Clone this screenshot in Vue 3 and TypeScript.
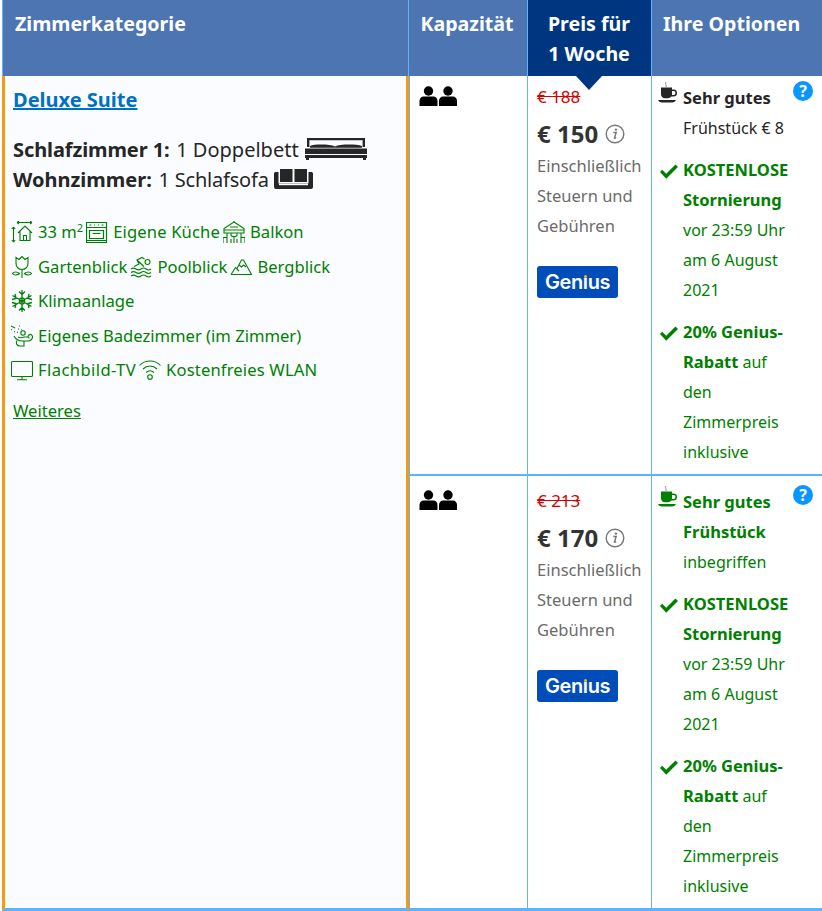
<script setup lang="ts">
interface Offer {
  oldPrice: string
  price: string
  breakfastGreen: boolean
  breakfastLines: string[]
  breakfastPlain: string
}
const offers: Offer[] = [
  { oldPrice: '€ 188', price: '€ 150', breakfastGreen: false, breakfastLines: ['Sehr gutes'], breakfastPlain: 'Frühstück € 8' },
  { oldPrice: '€ 213', price: '€ 170', breakfastGreen: true, breakfastLines: ['Sehr gutes', 'Frühstück'], breakfastPlain: 'inbegriffen' },
]
</script>

<template>
  <div class="page">
    <div class="head h1">Zimmerkategorie</div>
    <div class="head h2">Kapazität</div>
    <div class="head h3">Preis für<br />1 Woche<span class="notch"></span></div>
    <div class="head h4">Ihre Optionen</div>

    <div class="room">
      <a class="title">Deluxe Suite</a>
      <div class="beds">
        <div class="bedline">
          <b class="tight">Schlafzimmer 1:</b> 1 Doppelbett
          <svg class="bed" width="64" height="22" viewBox="0 0 64 22" fill="#262626">
            <path d="M3 0h58v2.200H3zM3 0h2.400v9H3zM58.600 0H61v9h-2.400z" />
            <path d="M6 8c4-2 20-2 25 .4 5-2.400 21-2.400 27-.4v1.800H6z" />
            <path d="M1 10.500h62V16H1zM1 17h62v3H1zM2 20h3v2H2zM59 20h3v2h-3z" />
          </svg>
        </div>
        <div class="bedline">
          <b>Wohnzimmer:</b> <span class="sofa-text">1 Schlafsofa</span>
          <svg class="sofa" width="39" height="22" viewBox="0 0 39 22" fill="#262626">
            <path d="M6 1h12.500v13H6zM20.500 1H33v13H20.500z" />
            <path d="M0 5.500C0 4.500 1 4 2 4h2.500v11.500h30V4H37c1 0 2 .5 2 1.500V19a2 2 0 0 1-2 2H2a2 2 0 0 1-2-2z" />
            <rect x="5" y="15.600" width="29" height="1.600" fill="#fbfcff" />
          </svg>
        </div>
      </div>

      <div class="fac">
        <span class="item">
          <svg class="ic" viewBox="0 0 22 22"><path d="M6 1.500h15M6 1.500L8 0M6 1.500L8 3M21 1.500L19 0M21 1.500L19 3M2.500 6v15M2.500 6L.8 8M2.500 6l1.700 2M2.500 21L.8 19M2.500 21l1.700-2M7 12l7-7 7 7M9 10.500v9h10v-9M12.500 19.500v-5h3v5" /></svg>
          <span>33 m<sup>2</sup></span>
        </span>
        <span class="item">
          <svg class="ic oven" viewBox="0 0 22 22"><path d="M.5 1.500h20v20H.5zM.5 6.500h20M3.500 4h2M8 4h1M12 4h1M15.500 4h2M3.500 9.500h14v8h-14zM6.500 12.500h8M.5 19.500h20" /></svg>
          <span class="wide1">Eigene Küche</span>
        </span>
        <span class="item">
          <svg class="ic" viewBox="0 0 22 22"><path d="M11 1L1 7.500V9h20V7.500zM11 0v1M7 6h8M1 9v3h20V9M4 12v10M18 12v10M0 16.500h4M18 16.500h4M0 16.500V22M22 16.500V22M8 12v2c0 2 6 2 6 0v-2M11 16v6M8 22v-4M14 22v-4" /></svg>
          <span>Balkon</span>
        </span>
      </div>
      <div class="fac">
        <span class="item">
          <svg class="ic" viewBox="0 0 22 22"><path d="M5 1.500l3 2 3-3 3 3 3-2v6a6 6 0 0 1-12 0zM11 13.500V22M1.500 17.500c1-2 5-2 7 0-2 2-6 2-7 0zM20.500 17.500c-1-2-5-2-7 0 2 2 6 2 7 0z" /></svg>
          <span>Gartenblick</span>
        </span>
        <span class="item">
          <svg class="ic" viewBox="0 0 22 22"><path d="M1 13c1.700-1.300 3-1.300 5 0s3.300 1.300 5 0 3.300-1.300 5 0 3.300 1.300 5 0M1 16.500c1.700-1.300 3-1.300 5 0s3.300 1.300 5 0 3.300-1.300 5 0 3.300 1.300 5 0M1 20c1.700-1.300 3-1.300 5 0s3.300 1.300 5 0 3.300-1.300 5 0 3.300 1.300 5 0M4 10.500l5-2.500-2-4 5-2.500 2.500 1.500M7.500 4.500l6.500 6" /><circle cx="17.500" cy="6" r="2.500" /></svg>
          <span>Poolblick</span>
        </span>
        <span class="item">
          <svg class="ic" viewBox="0 0 22 22"><path d="M1 18.500h20.500L13.500 4h-2L7 12.500M1 18.500l4.500-7 3.500 3.500M9 9l2.500 2 2-2 2.500 2" /></svg>
          <span>Bergblick</span>
        </span>
      </div>
      <div class="fac">
        <span class="item">
          <svg class="ic snow" viewBox="0 0 22 22"><path d="M11 0v22M1.500 5.500l19 11M20.500 5.500l-19 11M8 1.500l3 3 3-3M8 20.500l3-3 3 3M1 9.500l4-1L4 4M21 12.500l-4 1 1 4.500M21 9.500l-4-1L18 4M1 12.500l4 1L4 18M8.500 9l2.500-1.500L13.500 9v4L11 14.500 8.500 13z" /></svg>
          <span>Klimaanlage</span>
        </span>
      </div>
      <div class="fac">
        <span class="item">
          <svg class="ic" viewBox="0 0 22 22"><path d="M0 1l4 2M0 4.500l1 .5M3 6.500l1 .5M8 1h1M7 4h1M6 7l1 .5M10 5h1" /><circle cx="12" cy="8" r="2.200" /><path d="M3 11c2 4 5 5 9 5h5c2.500 0 4.500-2 4.500-4s-2-3.500-3.500-2-1 3 .5 3M7 12c2 1 4 1 6 0M13 12h4M6 15.500c-1.500 3 0 5.500 3 5.500h4v-5" /></svg>
          <span>Eigenes Badezimmer (im Zimmer)</span>
        </span>
      </div>
      <div class="fac">
        <span class="item">
          <svg class="ic" viewBox="0 0 22 22"><path d="M1.500 2.500h19a1 1 0 0 1 1 1v13a1 1 0 0 1-1 1h-19a1 1 0 0 1-1-1v-13a1 1 0 0 1 1-1zM11 17.500v3M6 20.700h10" /></svg>
          <span class="wide2">Flachbild-TV</span>
        </span>
        <span class="item">
          <svg class="ic" viewBox="0 0 22 22"><path d="M.5 6.500c5.500-6 15.500-6 21 0M4 10c4-4 10-4 14 0M7 13.500c2.500-2.200 5.500-2.200 8 0" /><circle cx="11" cy="18" r="2.300" /></svg>
          <span class="wide1">Kostenfreies WLAN</span>
        </span>
      </div>
      <a class="more">Weiteres</a>
    </div>

    <template v-for="(o, i) in offers" :key="i">
      <div class="cell cap" :class="{ second: i === 1 }">
        <svg width="38" height="21" viewBox="0 0 38 21" fill="#000">
          <circle cx="9.500" cy="5" r="4.700" /><path d="M.5 20v-5c0-3 2-4.500 4-4.500h10c2 0 4 1.500 4 4.500v5z" />
          <circle cx="29" cy="5" r="4.700" /><path d="M20 20v-5c0-3 2-4.500 4-4.500h10c2 0 4 1.500 4 4.500v5z" />
        </svg>
      </div>
      <div class="cell price" :class="{ second: i === 1 }">
        <div class="old">{{ o.oldPrice }}</div>
        <div class="now">{{ o.price }}
          <svg class="info" width="20" height="20" viewBox="0 0 20 20">
            <circle cx="10" cy="10" r="8.800" fill="none" stroke="#777" stroke-width="1.400" />
            <circle cx="10.900" cy="5.600" r="1.200" fill="#777" />
            <path d="M8.300 8.600h2.800l-1.600 5.400h1.700" fill="none" stroke="#777" stroke-width="1.500" />
          </svg>
        </div>
        <div class="tax">Einschließlich<br />Steuern und<br />Gebühren</div>
        <div class="genius">Gen<span class="gi">ı<i class="dot"></i></span>us</div>
      </div>
      <div class="cell opts" :class="{ second: i === 1 }">
        <div class="opt breakfast" :class="{ green: o.breakfastGreen }">
          <svg class="cup" width="19" height="22" viewBox="0 0 19 22">
            <path d="M8 0c-1.500 2 1 3 0 5" fill="none" stroke="#888" stroke-width="1" />
            <path d="M3 5.500h11v2h1.500a3 3 0 0 1 0 7h-2.300c-.8 1-2 1.700-3.200 1.700H7c-2.500 0-4-2-4-4zM14 9v4h1.500a2 2 0 0 0 0-4z" fill="currentColor" fill-rule="evenodd" />
            <path d="M0 18h18c-1 1.700-2 2.500-4 2.500H4c-2 0-3-.8-4-2.500z" fill="currentColor" />
          </svg>
          <svg class="help" width="20" height="20" viewBox="0 0 20 20">
            <circle cx="10" cy="10" r="10" fill="#0896ff" />
            <text x="10" y="15.800" text-anchor="middle" fill="#fff" font-size="16" font-weight="700" font-family="'Noto Sans', sans-serif">?</text>
          </svg>
          <b v-for="l in o.breakfastLines" :key="l">{{ l }}</b>
          <span>{{ o.breakfastPlain }}</span>
        </div>
        <div class="opt green">
          <svg class="check" width="18" height="15" viewBox="0 0 18 15"><path d="M0 8l2.200-2.200 4 4L15.500 0.500 18 3 6.200 14.800z" fill="#008000" /></svg>
          <b>KOSTENLOSE</b><b>Stornierung</b>
          <span>vor 23:59 Uhr</span><span>am 6 August</span><span>2021</span>
        </div>
        <div class="opt green">
          <svg class="check" width="18" height="15" viewBox="0 0 18 15"><path d="M0 8l2.200-2.200 4 4L15.500 0.500 18 3 6.200 14.800z" fill="#008000" /></svg>
          <div class="wrap"><b>20% Genius-<br />Rabatt</b> auf<br />den<br />Zimmerpreis<br />inklusive</div>
        </div>
      </div>
    </template>
  </div>
</template>

<style scoped>
.page {
  width: 822px;
  height: 911px;
  box-sizing: border-box;
  padding-left: 2px;
  display: grid;
  grid-template-columns: 407px 119px 124px 170px;
  grid-template-rows: 76px 400px 1fr;
  font-family: "Noto Sans", "Open Sans", sans-serif;
  font-size: 16px;
  color: #262626;
  background: #fff;
  overflow: hidden;
}
.head {
  position: relative;
  background: #4c75b1;
  color: #fff;
  font-weight: 700;
  font-size: 19.600px;
  line-height: 30px;
  padding: 9px 12px 0;
  border-right: 1px solid #5ab4ff;
  white-space: nowrap;
}
.h1 { padding-left: 12px; border-left: 1px solid #5ab4ff; }
.h2 { text-align: center; padding: 9px 2px 0 0; }
.h3 { background: #00367f; text-align: center; padding: 9px 1px 0 0; }
.h4 { border-right: 0; padding-left: 11px; padding-right: 0; }
.notch {
  position: absolute;
  left: 48px;
  top: 76px;
  width: 0;
  height: 0;
  border-left: 13px solid transparent;
  border-right: 13px solid transparent;
  border-top: 14px solid #00367f;
  z-index: 2;
}
.room {
  grid-row: 2 / 4;
  grid-column: 1;
  background: #fbfcff;
  border-left: 3px solid #f39c12;
  border-right: 3px solid #f39c12;
  border-bottom: 3px solid #5ab4ff;
  padding: 10px 8px 0;
}
.title {
  display: block;
  color: #0071c2;
  font-weight: 700;
  font-size: 20px;
  line-height: 28px;
  text-decoration: underline;
}
.beds { margin-top: 21px; margin-bottom: 23px; font-size: 20px; line-height: 29px; }
.bedline { white-space: nowrap; height: 30px; }
.bedline b { margin-right: 1.500px; }
.bedline b.tight { letter-spacing: -0.1px; }
.sofa-text { letter-spacing: -0.2px; }
.bed, .sofa { vertical-align: -3px; }
.sofa { margin-left: 5px; }
.fac { display: flex; height: 34.500px; align-items: flex-start; color: #008000; font-size: 16.600px; margin-left: -2px; }
.item { display: flex; align-items: center; gap: 5px; line-height: 28px; white-space: nowrap; margin-right: 3px; }
.item sup { font-size: 11px; line-height: 0; position: relative; top: -6px; vertical-align: baseline; }
.wide1 { letter-spacing: 0.15px; }
.wide2 { letter-spacing: 0.4px; }
.ic { width: 22px; height: 22px; fill: none; stroke: #008000; stroke-width: 1.100; flex: none; }
.snow { stroke-width: 1.300; }
.oven { stroke-width: 1.200; }
.more { display: inline-block; margin-top: 6px; color: #008000; font-size: 16.600px; text-decoration: underline; line-height: 28px; }
.cell {
  border-right: 1px solid #5ab4ff;
  border-bottom: 2px solid #5ab4ff;
  padding: 0 9px;
  min-width: 0;
}
.cell.second { border-bottom-width: 3px; padding-top: 4px; }
.cap { border-left: 1px solid #5ab4ff; padding: 10px 0 0 9px; }
.cap.second { padding-top: 14px; }
.cap svg { display: block; }
.price { line-height: 30px; }
.old { color: #d80000; font-size: 17px; text-decoration: line-through; line-height: 22px; margin-top: 10px; }
.now { display: flex; align-items: center; gap: 7px; font-size: 24px; font-weight: 700; color: #333; line-height: 36px; margin-top: 8px; }
.tax { color: #6b6b6b; font-size: 16.500px; margin-top: -1px; line-height: 30px; white-space: nowrap; }
.genius {
  margin-top: 25px;
  width: 81px;
  height: 32px;
  background: #004cb8;
  border-radius: 3px;
  color: #fff;
  font-family: Inter, sans-serif;
  font-weight: 600;
  font-size: 20px;
  letter-spacing: -0.4px;
  line-height: 33px;
  text-align: center;
}
.gi { position: relative; }
.dot { position: absolute; left: 1px; top: 4.500px; width: 3.400px; height: 3.400px; border-radius: 50%; background: #febb02; }
.opts { border-right: 0; padding: 0 0 0 31px; line-height: 30px; }
.opt { position: relative; display: flex; flex-direction: column; margin-top: 12px; }
.opt b { font-size: 16.500px; }
.breakfast { margin-top: 7px; color: #262626; }
.opt.green { color: #008000; }
.cup { position: absolute; left: -25px; top: -1px; color: #262626; }
.breakfast.green .cup { color: #008000; }
.help { position: absolute; right: 9px; top: -2px; }
.check { position: absolute; left: -23px; top: 9px; }
.wrap { white-space: nowrap; }
</style>

<style>
html, body { margin: 0; background: #fff; }
</style>
